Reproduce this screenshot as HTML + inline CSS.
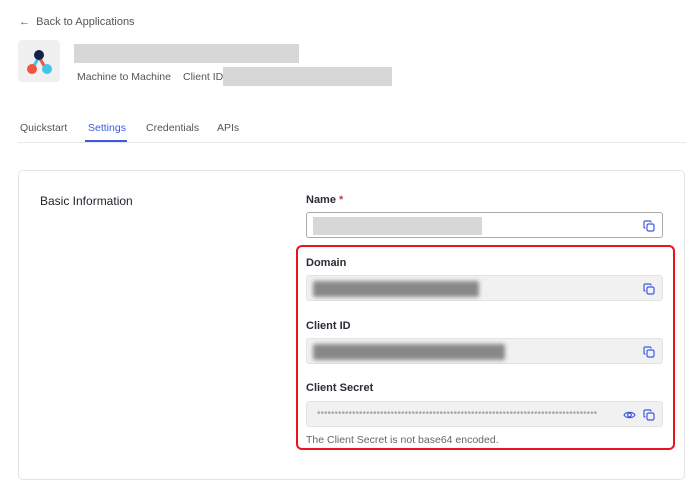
<!DOCTYPE html>
<html><head><style>
body{margin:0;width:700px;height:460px;background:#fff;font-family:"Liberation Sans",sans-serif;overflow:hidden;position:relative;color:#1e212a}
.a{position:absolute}
.lbl{position:absolute;left:306px;font-size:11px;font-weight:bold;color:#2a2d35}
.inp{position:absolute;left:306px;width:357px;height:26px;box-sizing:border-box;border-radius:3px;background:#f1f1f1;border:1px solid #e3e3e3}
.blur{position:absolute;left:6px;top:5px;height:16px;background:#888;filter:blur(2px);border-radius:2px}
.cp{position:absolute;right:7px;top:7px}
</style></head><body>
<div class="a" style="left:19px;top:16px;font-size:11px;color:#555">&#8592;&nbsp; Back to Applications</div>
<div class="a" style="left:18px;top:40px;width:42px;height:42px;background:#f0f0f0;border-radius:4px">
<svg width="42" height="42"><line x1="21" y1="17" x2="14" y2="29" stroke="#3ec6ee" stroke-width="3"/><line x1="21" y1="17" x2="28" y2="29" stroke="#f0573a" stroke-width="3"/><circle cx="21" cy="15" r="5" fill="#13214a"/><circle cx="14" cy="29" r="5" fill="#f0573a"/><circle cx="29" cy="29" r="5" fill="#3ec6ee"/></svg></div>
<div class="a" style="left:74px;top:44px;width:225px;height:19px;background:#d7d7d7"></div>
<div class="a" style="left:77px;top:71px;font-size:10.5px;color:#555">Machine to Machine</div>
<div class="a" style="left:183px;top:71px;font-size:10.5px;color:#555">Client ID</div>
<div class="a" style="left:223px;top:67px;width:169px;height:19px;background:#d7d7d7"></div>
<div class="a" style="left:20px;top:122px;font-size:10.5px;color:#555">Quickstart</div>
<div class="a" style="left:88px;top:122px;font-size:10.5px;color:#3f59e4">Settings</div>
<div class="a" style="left:85px;top:140px;width:42px;height:2px;background:#3f59e4"></div>
<div class="a" style="left:146px;top:122px;font-size:10.5px;color:#555">Credentials</div>
<div class="a" style="left:217px;top:122px;font-size:10.5px;color:#555">APIs</div>
<div class="a" style="left:18px;top:142px;width:668px;height:1px;background:#e8e8e8"></div>
<div class="a" style="left:18px;top:170px;width:667px;height:310px;border:1px solid #e3e3e3;border-radius:5px;box-sizing:border-box"></div>
<div class="a" style="left:40px;top:194px;font-size:12px;color:#1e212a">Basic Information</div>
<div class="lbl" style="top:194px">Name <span style="color:#d03c38">*</span></div>
<div class="inp" style="top:212px;background:#fff;border-color:#aaa"><div style="position:absolute;left:6px;top:4px;width:169px;height:18px;background:#d7d7d7"></div><svg class="cp" width="12" height="12" viewBox="0 0 12 12" fill="none" stroke="#3f59e4" stroke-width="1.2"><rect x="4" y="4" width="7" height="7" rx="1.5"/><path d="M8 2.5V2a1 1 0 0 0-1-1H2a1 1 0 0 0-1 1v5a1 1 0 0 0 1 1h.5"/></svg></div>
<div class="a" style="left:296px;top:245px;width:379px;height:205px;border:2px solid #e8141f;border-radius:6px;box-sizing:border-box"></div>
<div class="lbl" style="top:257px">Domain</div>
<div class="inp" style="top:275px"><div class="blur" style="width:166px"></div><svg class="cp" width="12" height="12" viewBox="0 0 12 12" fill="none" stroke="#3f59e4" stroke-width="1.2"><rect x="4" y="4" width="7" height="7" rx="1.5"/><path d="M8 2.5V2a1 1 0 0 0-1-1H2a1 1 0 0 0-1 1v5a1 1 0 0 0 1 1h.5"/></svg></div>
<div class="lbl" style="top:320px">Client ID</div>
<div class="inp" style="top:338px"><div class="blur" style="width:192px"></div><svg class="cp" width="12" height="12" viewBox="0 0 12 12" fill="none" stroke="#3f59e4" stroke-width="1.2"><rect x="4" y="4" width="7" height="7" rx="1.5"/><path d="M8 2.5V2a1 1 0 0 0-1-1H2a1 1 0 0 0-1 1v5a1 1 0 0 0 1 1h.5"/></svg></div>
<div class="lbl" style="top:382px">Client Secret</div>
<div class="inp" style="top:401px"><div style="position:absolute;left:10px;top:6px;font-size:10px;color:#aaa;white-space:nowrap;overflow:hidden;width:284px">&#8226;&#8226;&#8226;&#8226;&#8226;&#8226;&#8226;&#8226;&#8226;&#8226;&#8226;&#8226;&#8226;&#8226;&#8226;&#8226;&#8226;&#8226;&#8226;&#8226;&#8226;&#8226;&#8226;&#8226;&#8226;&#8226;&#8226;&#8226;&#8226;&#8226;&#8226;&#8226;&#8226;&#8226;&#8226;&#8226;&#8226;&#8226;&#8226;&#8226;&#8226;&#8226;&#8226;&#8226;&#8226;&#8226;&#8226;&#8226;&#8226;&#8226;&#8226;&#8226;&#8226;&#8226;&#8226;&#8226;&#8226;&#8226;&#8226;&#8226;&#8226;&#8226;&#8226;&#8226;&#8226;&#8226;&#8226;&#8226;&#8226;&#8226;&#8226;&#8226;&#8226;&#8226;&#8226;&#8226;&#8226;&#8226;&#8226;&#8226;</div>
<svg style="position:absolute;left:316px;top:7px" width="13" height="12" viewBox="0 0 13 12" fill="none" stroke="#3f59e4" stroke-width="1.2"><path d="M1 6c2-3.5 9-3.5 11 0-2 3.5-9 3.5-11 0z"/><circle cx="6.5" cy="6" r="1.8"/></svg>
<svg class="cp" width="12" height="12" viewBox="0 0 12 12" fill="none" stroke="#3f59e4" stroke-width="1.2"><rect x="4" y="4" width="7" height="7" rx="1.5"/><path d="M8 2.5V2a1 1 0 0 0-1-1H2a1 1 0 0 0-1 1v5a1 1 0 0 0 1 1h.5"/></svg></div>
<div class="a" style="left:306px;top:434px;font-size:10.5px;color:#666">The Client Secret is not base64 encoded.</div>
</body></html>
